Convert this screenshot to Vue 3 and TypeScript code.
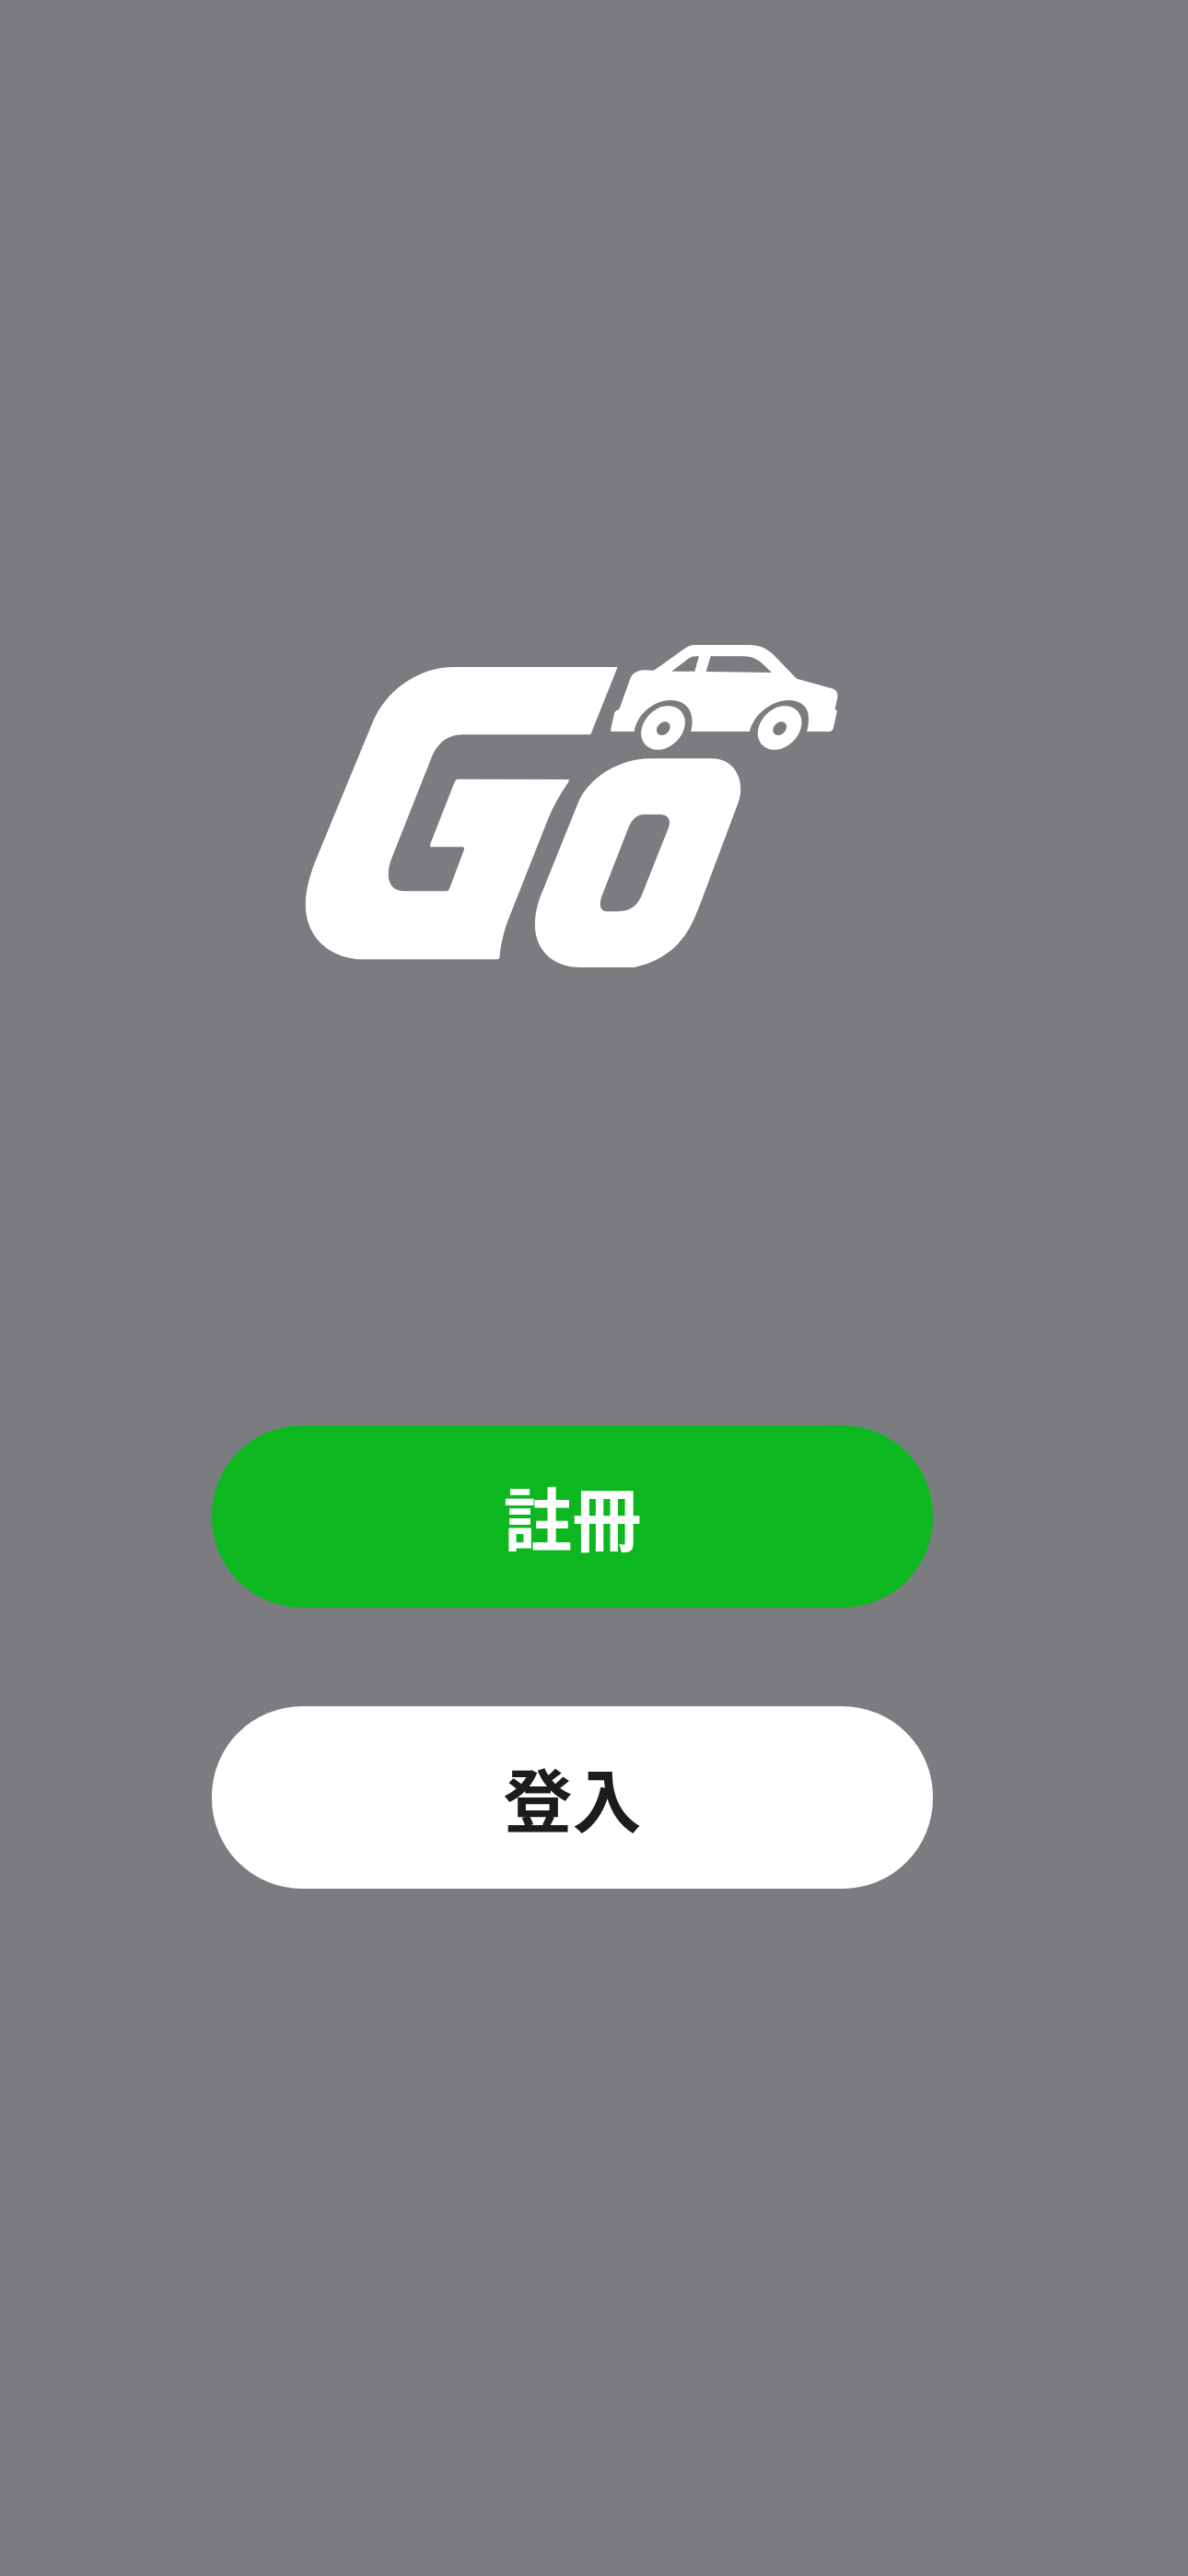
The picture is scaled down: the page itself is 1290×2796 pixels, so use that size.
<script setup lang="ts">
const actions = [
  { key: 'register', label: '註冊', primary: true },
  { key: 'login', label: '登入', primary: false },
];
</script>

<template>
  <main class="page">
    <div class="content">
      <svg class="logo" viewBox="0 0 620 400" width="620" height="400" role="img" aria-label="Go">
        <g transform="scale(0.39541 0.33333)" fill="#fff" fill-rule="evenodd">
          <path d="M912 132 L838 352 L490 352 C440 352 415 385 400 430 L290 760 C275 810 280 862 330 862 L438 862 C445 862 449 858 451 851 L490 728 C492 721 489 718 484 718 L398 718 L397 710 L465 505 C467 499 471 497 477 497 L778 498 L778 505 C755 545 735 585 720 630 L610 960 C595 1010 590 1050 588 1075 C588 1081 586 1084 580 1084 L215 1084 C120 1084 55 1010 55 905 C55 855 70 798 85 755 L240 310 C275 210 365 132 460 132 Z" />
          <path d="M1000 430 L1170 430 C1225 430 1250 480 1250 530 C1250 550 1245 570 1235 600 L1140 900 C1125 945 1115 975 1100 1000 C1060 1070 1010 1095 958 1110 L810 1110 C740 1110 685 1060 685 970 C685 930 695 890 710 850 L805 570 C835 490 920 430 1000 430 Z M985 612 L1030 612 C1050 612 1060 630 1052 655 L980 870 C965 915 945 928 905 928 L885 928 C865 928 860 910 868 880 L942 655 C950 630 965 612 985 612 Z" />
        </g>
        <g transform="translate(330 0) scale(0.33333)">
          <path fill="#fff" fill-rule="evenodd" d="M210 143 L310 72 C322 64 330 60 345 60 L520 60 C555 60 575 70 600 92 L670 165 C675 170 680 172 690 174 L790 202 C805 206 810 218 808 232 L800 270 L806 272 L806 280 L795 330 C793 338 788 342 780 342 L708 342 C715 320 715 300 712 280 C705 255 680 240 650 240 C595 240 535 285 522 342 L330 342 C338 315 336 290 325 270 C312 250 292 240 265 240 C210 240 155 285 146 342 L75 342 C70 342 68 338 70 332 L82 280 C84 275 90 272 97 270 L133 170 C140 150 160 142 180 142 Z M268 146 L322 105 C330 99 338 97 357 97 L343 146 Z M395 97 L500 97 C535 97 550 110 565 122 L594 150 L380 147 Z" />
          <ellipse cx="240" cy="330" rx="80" ry="62" transform="rotate(-45 240 330)" fill="#fff" />
          <ellipse cx="620" cy="330" rx="80" ry="62" transform="rotate(-45 620 330)" fill="#fff" />
          <ellipse cx="241" cy="332" rx="25" ry="19" transform="rotate(-45 241 332)" fill="#7b7c80" />
          <ellipse cx="620" cy="332" rx="25" ry="19" transform="rotate(-45 620 332)" fill="#7b7c80" />
        </g>
      </svg>
      <div class="actions">
        <button
          v-for="action in actions"
          :key="action.key"
          type="button"
          class="action"
          :class="{ primary: action.primary }"
        >
          {{ action.label }}
        </button>
      </div>
    </div>
  </main>
</template>

<style scoped>
.page {
  width: 1290px;
  height: 2796px;
  background: #7b7c80;
  overflow: hidden;
}

.content {
  display: flex;
  flex-direction: column;
  width: 783px;
  margin-left: 230px;
  padding-top: 680px;
}

.logo {
  display: block;
  margin-left: 80px;
}

.actions {
  display: flex;
  flex-direction: column;
  gap: 107.5px;
  margin-top: 467px;
}

.action {
  height: 197.5px;
  border: none;
  border-radius: 98px;
  background: #fff;
  color: #1c1c1c;
  font-family: "Noto Sans CJK JP", "Noto Sans", sans-serif;
  font-size: 75px;
  font-weight: 700;
  line-height: 1;
  padding: 0;
}

.action.primary {
  background: #0db720;
  color: #fff;
}
</style>

<style>
body {
  background: #7b7c80;
}
</style>
